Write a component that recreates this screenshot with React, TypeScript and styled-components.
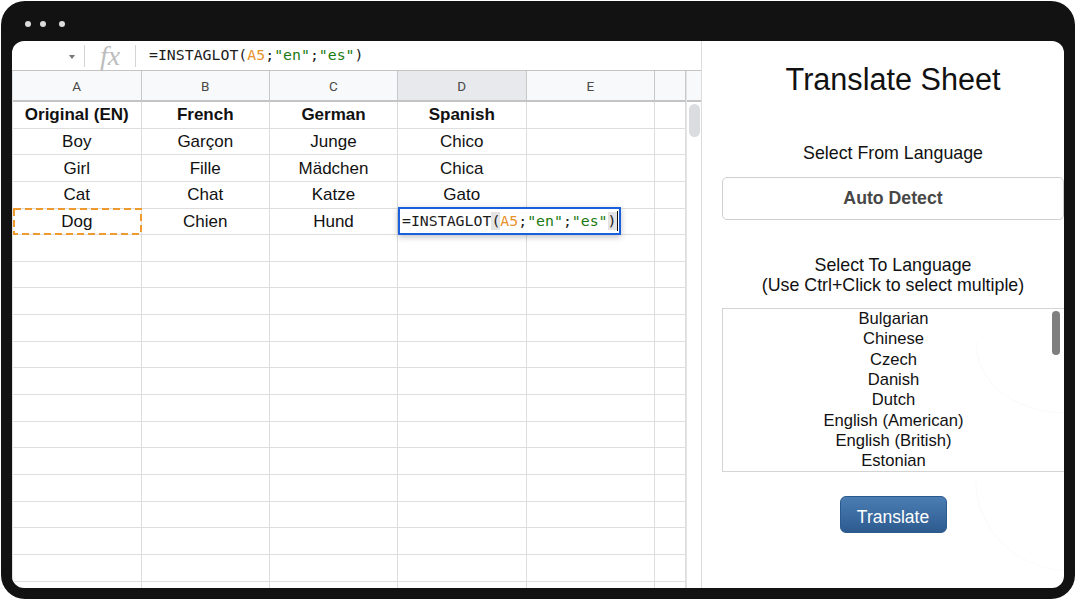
import styled, { createGlobalStyle } from "styled-components";

const GlobalStyle = createGlobalStyle`
  html, body {
    margin: 0;
    padding: 0;
    background: #fff;
    font-family: "Liberation Sans", Arial, sans-serif;
  }
`;

const Frame = styled.div`
  box-sizing: border-box;
  width: 1074px;
  height: 598px;
  margin: 1px;
  padding: 0 11px 11px;
  display: flex;
  flex-direction: column;
  background: #121212;
  border-radius: 24px;
`;

const TitleBar = styled.div`
  height: 40px;
  flex: none;
  display: flex;
  align-items: center;
  padding: 6px 0 0 13px;
  box-sizing: border-box;
`;

const Dot = styled.span<{ $gap: number }>`
  width: 6px;
  height: 6px;
  border-radius: 50%;
  background: #dcdcdc;
  margin-right: ${(p) => p.$gap}px;
`;

const Screen = styled.div`
  flex: 1;
  display: flex;
  min-height: 0;
  background: #fff;
  border-radius: 12px;
  overflow: hidden;
`;

const SheetPane = styled.div`
  width: 689px;
  flex: none;
  display: flex;
  flex-direction: column;
  border-right: 1px solid #dcdcdc;
  box-sizing: content-box;
  min-height: 0;
`;

const FormulaBar = styled.div`
  height: 29px;
  flex: none;
  display: flex;
  align-items: center;
  border-bottom: 1px solid #c4c4c4;
`;

const NameCaret = styled.span`
  width: 0;
  height: 0;
  margin-left: 57px;
  margin-top: 3px;
  border-left: 3.5px solid transparent;
  border-right: 3.5px solid transparent;
  border-top: 4px solid #777;
`;

const BarDivider = styled.span<{ $left: number }>`
  width: 1px;
  height: 22px;
  background: #d4d4d4;
  margin-left: ${(p) => p.$left}px;
`;

const FxLabel = styled.span`
  width: 50px;
  text-align: center;
  font-family: "Liberation Serif", serif;
  font-style: italic;
  font-size: 28px;
  line-height: 28px;
  color: #bdbdbd;
`;

const FormulaText = styled.span`
  margin-left: 13px;
  margin-bottom: 2px;
  font-family: "DejaVu Sans Mono", monospace;
  font-size: 14.85px;
  color: #1c1c1c;
  white-space: pre;
`;

const Ref = styled.span`
  color: #e8912d;
`;

const Str = styled.span`
  color: #1b7a12;
`;

const SheetBody = styled.div`
  flex: 1;
  display: flex;
  min-height: 0;
  overflow: hidden;
`;

const Grid = styled.div`
  width: 674px;
  flex: none;
  box-sizing: border-box;
  display: grid;
  grid-template-columns: 128.5px 128.5px 128px 128.5px 128.5px 31px;
  grid-template-rows: 31px;
  grid-auto-rows: 26.65px;
  border-left: 1px solid #e0e0e0;
`;

const HeaderCell = styled.div<{ $active?: boolean }>`
  box-sizing: border-box;
  display: flex;
  align-items: center;
  justify-content: center;
  font-family: Roboto, sans-serif;
  font-size: 13.5px;
  color: #4a4a4a;
  background: ${(p) => (p.$active ? "#e7e9ed" : "#f8f9fa")};
  border-right: 1px solid #c8c8c8;
  border-bottom: 2px solid #c4c4c4;
`;

const Cell = styled.div<{ $bold?: boolean }>`
  position: relative;
  box-sizing: border-box;
  display: flex;
  align-items: center;
  justify-content: center;
  padding-top: 1px;
  font-size: 17px;
  font-weight: ${(p) => (p.$bold ? 700 : 400)};
  color: #111;
  border-right: 1px solid #dcdcdc;
  border-bottom: 1px solid #dedede;
  white-space: nowrap;
`;

const CopiedRange = styled.div`
  position: absolute;
  inset: -1px -1px -1px 0;
  pointer-events: none;
`;

const CellEditor = styled.div`
  position: absolute;
  z-index: 2;
  left: 0;
  top: -2px;
  width: 223px;
  height: 28px;
  box-sizing: border-box;
  display: flex;
  align-items: center;
  padding-left: 2px;
  background: #fff;
  border: 2px solid #1a5fdc;
  box-shadow: 0 2px 6px rgba(0, 0, 0, 0.25);
  font-family: "DejaVu Sans Mono", monospace;
  font-size: 14.85px;
  font-weight: 400;
  color: #1c1c1c;
  white-space: pre;
`;

const Paren = styled.span`
  background: #e4e4e4;
`;

const Caret = styled.span`
  display: inline-block;
  width: 1px;
  height: 20px;
  background: #111;
  vertical-align: middle;
`;

const ScrollTrack = styled.div`
  width: 15px;
  flex: none;
  display: flex;
  flex-direction: column;
  align-items: center;
  border-left: 1px solid #e4e4e4;
  box-sizing: border-box;
`;

const ScrollCorner = styled.div`
  height: 31px;
  width: 100%;
  flex: none;
  box-sizing: border-box;
  background: #f8f9fa;
  border-bottom: 2px solid #c4c4c4;
`;

const ScrollThumb = styled.div`
  width: 11px;
  height: 33px;
  margin-top: 2px;
  border-radius: 6px;
  background: #dadce0;
`;

const SidePanel = styled.div`
  position: relative;
  flex: 1;
  min-width: 0;
  display: flex;
  flex-direction: column;
  align-items: center;
  padding: 20px 0 0 20px;
  box-sizing: border-box;
  color: #111;
  overflow: hidden;
`;

const PanelArcs = styled.svg`
  position: absolute;
  right: 0;
  top: 280px;
`;

const PanelTitle = styled.h1`
  margin: 0;
  font-size: 30.6px;
  font-weight: 400;
  line-height: 36px;
`;

const FieldLabel = styled.div<{ $top: number }>`
  margin-top: ${(p) => p.$top}px;
  font-size: 17.8px;
  line-height: 20px;
  text-align: center;
`;

const AutoBox = styled.div`
  position: relative;
  box-sizing: border-box;
  width: 342px;
  height: 43px;
  margin-top: 14px;
  display: flex;
  align-items: center;
  justify-content: center;
  border: 1.5px solid #cfcfcf;
  border-radius: 5px;
  font-size: 17.7px;
  font-weight: 700;
  color: #474747;
  background: #fff;
`;

const ListBox = styled.div`
  position: relative;
  box-sizing: border-box;
  width: 342px;
  height: 164px;
  margin-top: 13px;
  border: 1.5px solid #d4d4d4;
  border-right: none;
  overflow: hidden;
`;

const ListItem = styled.div`
  height: 20.35px;
  line-height: 20.35px;
  font-size: 16.6px;
  text-align: center;
  color: #111;
`;

const ListThumb = styled.div`
  position: absolute;
  right: 4px;
  top: 2px;
  width: 8px;
  height: 44px;
  border-radius: 4px;
  background: #7f7f7f;
`;

const TranslateButton = styled.button`
  box-sizing: border-box;
  width: 107px;
  height: 37px;
  margin-top: 24px;
  padding: 6px 0 0;
  border: 1px solid #2b5a8d;
  border-radius: 6px;
  background: linear-gradient(#4a7db3, #2d5b90);
  color: #fff;
  font-family: "Liberation Sans", Arial, sans-serif;
  font-size: 17.5px;
`;

const columns = ["A", "B", "C", "D", "E", ""];

const rows = [
  ["Original (EN)", "French", "German", "Spanish"],
  ["Boy", "Garçon", "Junge", "Chico"],
  ["Girl", "Fille", "Mädchen", "Chica"],
  ["Cat", "Chat", "Katze", "Gato"],
  ["Dog", "Chien", "Hund", ""],
];

const EMPTY_ROWS = 14;

const languages = [
  "Bulgarian",
  "Chinese",
  "Czech",
  "Danish",
  "Dutch",
  "English (American)",
  "English (British)",
  "Estonian",
];

const App = () => {
  return (
    <>
      <GlobalStyle />
      <Frame>
        <TitleBar>
          <Dot $gap={9} />
          <Dot $gap={13} />
          <Dot $gap={0} />
        </TitleBar>
        <Screen>
          <SheetPane>
            <FormulaBar>
              <NameCaret />
              <BarDivider $left={9} />
              <FxLabel>fx</FxLabel>
              <BarDivider $left={0} />
              <FormulaText>
                =INSTAGLOT(<Ref>A5</Ref>;<Str>"en"</Str>;<Str>"es"</Str>)
              </FormulaText>
            </FormulaBar>
            <SheetBody>
              <Grid>
                {columns.map((c) => (
                  <HeaderCell key={c} $active={c === "D"}>
                    {c}
                  </HeaderCell>
                ))}
                {rows.map((row, r) =>
                  columns.map((_, c) => (
                    <Cell key={`${r}-${c}`} $bold={r === 0}>
                      {row[c]}
                      {r === 4 && c === 0 && (
                        <CopiedRange>
                          <svg width="129" height="28" fill="none">
                            <rect
                              x="1"
                              y="1"
                              width="127"
                              height="25"
                              stroke="#ee9a2e"
                              strokeWidth="2"
                              strokeDasharray="7 4"
                            />
                          </svg>
                        </CopiedRange>
                      )}
                      {r === 4 && c === 3 && (
                        <CellEditor>
                          =INSTAGLOT<Paren>(</Paren>
                          <Ref>A5</Ref>;<Str>"en"</Str>;<Str>"es"</Str>
                          <Paren>)</Paren>
                          <Caret />
                        </CellEditor>
                      )}
                    </Cell>
                  )),
                )}
                {Array.from({ length: EMPTY_ROWS * columns.length }, (_, i) => (
                  <Cell key={i} />
                ))}
              </Grid>
              <ScrollTrack>
                <ScrollCorner />
                <ScrollThumb />
              </ScrollTrack>
            </SheetBody>
          </SheetPane>
          <SidePanel>
            <PanelArcs width="100" height="260" fill="none" stroke="#fafafa">
              <path d="M12 20c0 40 35 70 88 72" />
              <path d="M12 160c0 45 35 85 88 90" />
            </PanelArcs>
            <PanelTitle>Translate Sheet</PanelTitle>
            <FieldLabel $top={46}>Select From Language</FieldLabel>
            <AutoBox>Auto Detect</AutoBox>
            <FieldLabel $top={35}>
              Select To Language
              <br />
              (Use Ctrl+Click to select multiple)
            </FieldLabel>
            <ListBox>
              {languages.map((l) => (
                <ListItem key={l}>{l}</ListItem>
              ))}
              <ListThumb />
            </ListBox>
            <TranslateButton>Translate</TranslateButton>
          </SidePanel>
        </Screen>
      </Frame>
    </>
  );
};

export default App;
